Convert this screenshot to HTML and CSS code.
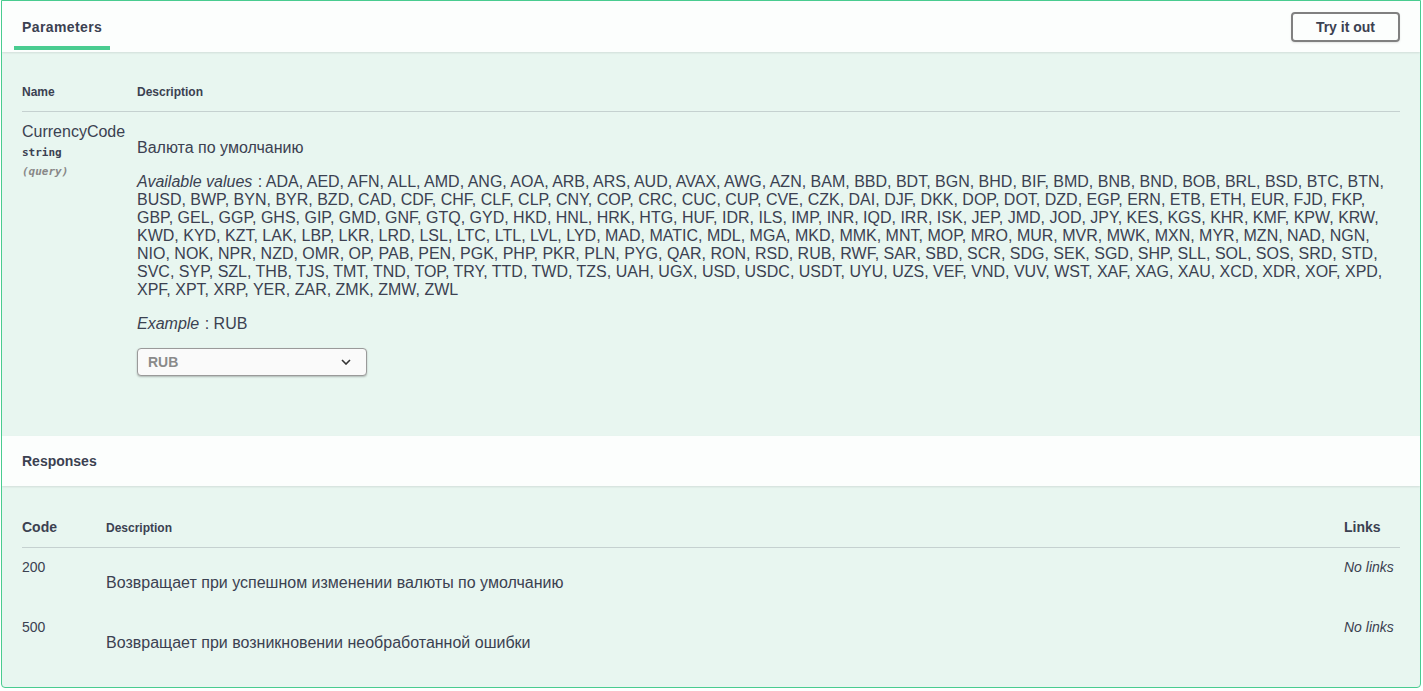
FILE: index.html
```html
<!DOCTYPE html>
<html lang="ru">
<head>
<meta charset="utf-8">
<title>Parameters</title>
<link rel="stylesheet" href="styles.css">
</head>
<body>
<div class="opblock">
  <div class="section-header">
    <div class="tab"><h4 class="tab-title">Parameters</h4></div>
    <button class="btn-try" type="button">Try it out</button>
  </div>
  <div class="params-body">
    <div class="ptable">
      <div class="prow phead">
        <div class="pcol-name">Name</div>
        <div class="pcol-desc">Description</div>
      </div>
      <div class="prow pitem">
        <div class="pcol-name">
          <div class="param-name">CurrencyCode</div>
          <div class="param-type">string</div>
          <div class="param-in">(query)</div>
        </div>
        <div class="pcol-desc">
          <p class="md">Валюта по умолчанию</p>
          <p class="md"><i class="lbl">Available values</i> : ADA, AED, AFN, ALL, AMD, ANG, AOA, ARB, ARS, AUD, AVAX, AWG, AZN, BAM, BBD, BDT, BGN, BHD, BIF, BMD, BNB, BND, BOB, BRL, BSD, BTC, BTN, BUSD, BWP, BYN, BYR, BZD, CAD, CDF, CHF, CLF, CLP, CNY, COP, CRC, CUC, CUP, CVE, CZK, DAI, DJF, DKK, DOP, DOT, DZD, EGP, ERN, ETB, ETH, EUR, FJD, FKP, GBP, GEL, GGP, GHS, GIP, GMD, GNF, GTQ, GYD, HKD, HNL, HRK, HTG, HUF, IDR, ILS, IMP, INR, IQD, IRR, ISK, JEP, JMD, JOD, JPY, KES, KGS, KHR, KMF, KPW, KRW, KWD, KYD, KZT, LAK, LBP, LKR, LRD, LSL, LTC, LTL, LVL, LYD, MAD, MATIC, MDL, MGA, MKD, MMK, MNT, MOP, MRO, MUR, MVR, MWK, MXN, MYR, MZN, NAD, NGN, NIO, NOK, NPR, NZD, OMR, OP, PAB, PEN, PGK, PHP, PKR, PLN, PYG, QAR, RON, RSD, RUB, RWF, SAR, SBD, SCR, SDG, SEK, SGD, SHP, SLL, SOL, SOS, SRD, STD, SVC, SYP, SZL, THB, TJS, TMT, TND, TOP, TRY, TTD, TWD, TZS, UAH, UGX, USD, USDC, USDT, UYU, UZS, VEF, VND, VUV, WST, XAF, XAG, XAU, XCD, XDR, XOF, XPD, XPF, XPT, XRP, YER, ZAR, ZMK, ZMW, ZWL</p>
          <p class="md md-example"><i class="lbl">Example</i> : RUB</p>
          <div class="select">
            <span class="select-value">RUB</span>
            <svg class="chev" width="10" height="6" viewBox="0 0 10 6"><path d="M1 1 L5 5 L9 1" fill="none" stroke="#333" stroke-width="1.6"/></svg>
          </div>
        </div>
      </div>
    </div>
  </div>
  <div class="section-header resp-header">
    <h4 class="sec-title">Responses</h4>
  </div>
  <div class="resp-body">
    <div class="rtable">
      <div class="rrow rhead">
        <div class="rcol-code big">Code</div>
        <div class="rcol-desc small">Description</div>
        <div class="rcol-links big">Links</div>
      </div>
      <div class="rrow ritem">
        <div class="rcol-code">200</div>
        <div class="rcol-desc"><p class="md">Возвращает при успешном изменении валюты по умолчанию</p></div>
        <div class="rcol-links"><i>No links</i></div>
      </div>
      <div class="rrow ritem">
        <div class="rcol-code">500</div>
        <div class="rcol-desc"><p class="md">Возвращает при возникновении необработанной ошибки</p></div>
        <div class="rcol-links"><i>No links</i></div>
      </div>
    </div>
  </div>
</div>
</body>
</html>
```

FILE: styles.css
```css
* { box-sizing: border-box; }
html, body { margin: 0; padding: 0; background: #ffffff; }
body {
  font-family: "Liberation Sans", Arial, sans-serif;
  color: #3b4151;
}
.opblock {
  margin-left: 1px;
  width: 1420px;
  height: 688px;
  border: 1px solid #49cc90;
  border-radius: 0 0 4px 4px;
  background: #e8f6f0;
  overflow: hidden;
}
.section-header {
  display: flex;
  align-items: center;
  justify-content: space-between;
  height: 51px;
  padding: 0 20px 0 12px;
  background: rgba(255, 255, 255, 0.85);
  box-shadow: 0 1px 2px rgba(0, 0, 0, 0.1);
  position: relative;
}
.tab {
  align-self: stretch;
  display: flex;
  align-items: flex-end;
  padding-bottom: 2px;
}
.tab-title {
  margin: 0;
  font-size: 14px;
  font-weight: 700;
  line-height: 16px;
  letter-spacing: 0.4px;
  padding: 0 8px 11px;
  border-bottom: 4px solid #49cc90;
}
.btn-try {
  font-family: "Liberation Sans", Arial, sans-serif;
  font-size: 14px;
  font-weight: 700;
  line-height: 16px;
  color: #3b4151;
  background: transparent;
  border: 2px solid #808080;
  border-radius: 4px;
  padding: 5px 23px;
  height: 30px;
  box-shadow: 0 1px 2px rgba(0, 0, 0, 0.1);
  margin-top: 1px;
}
.params-body {
  padding: 21px 20px 0 20px;
  height: 384px;
}
.prow { display: flex; }
.pcol-name { width: 115px; flex: none; }
.pcol-desc { flex: 1; min-width: 0; }
.phead {
  font-size: 12px;
  font-weight: 700;
  line-height: 14px;
  padding: 12px 0;
  border-bottom: 1px solid rgba(59, 65, 81, 0.2);
}
.pitem { padding: 11px 0 10px; }
.param-name { font-size: 16px; line-height: 18px; }
.param-type {
  font-family: "DejaVu Sans Mono", "Liberation Mono", monospace;
  font-size: 11px;
  font-weight: 700;
  line-height: 14px;
  padding: 5px 0;
}
.param-in {
  font-family: "DejaVu Sans Mono", "Liberation Mono", monospace;
  font-size: 11px;
  font-style: italic;
  font-weight: 700;
  line-height: 14px;
  color: #888888;
}
.md {
  margin: 16px 0;
  font-size: 16px;
  line-height: 18px;
}
.lbl { padding-right: 1px; }
.md-example { margin: 16px 0 15px; }
.select {
  display: flex;
  align-items: center;
  justify-content: space-between;
  width: 230px;
  height: 28px;
  padding: 0 15px 0 10px;
  border: 1px solid #9a9a9a;
  border-radius: 4px;
  background: #fafafa;
  box-shadow: 0 1px 2px rgba(0, 0, 0, 0.25);
}
.select-value {
  font-size: 14px;
  font-weight: 700;
  color: #8a8a8a;
}
.chev { display: block; }
.resp-header { height: 50px; padding: 0 20px; }
.sec-title {
  margin: 0;
  font-size: 14px;
  font-weight: 700;
  line-height: 16px;
}
.resp-body { padding: 21px 20px 0 20px; }
.rrow { display: flex; }
.rcol-code { width: 84px; flex: none; }
.rcol-desc { flex: 1; min-width: 0; }
.rcol-links { width: 56px; flex: none; }
.rhead {
  align-items: baseline;
  padding: 12px 0 11px;
  border-bottom: 1px solid rgba(59, 65, 81, 0.2);
  font-weight: 700;
  line-height: 16px;
}
.rhead .big { font-size: 14px; }
.rhead .small { font-size: 12px; }
.ritem { padding-top: 11px; font-size: 14px; line-height: 16px; }
.ritem .md { margin: 15px 0 16px; }
.rcol-links i { font-size: 14px; }
```
